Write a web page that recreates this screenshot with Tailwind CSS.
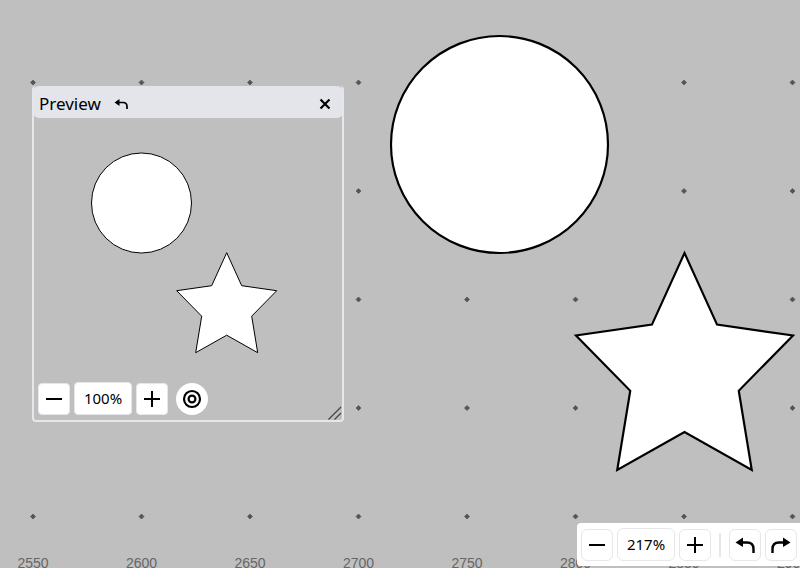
<!DOCTYPE html>
<html lang="en">
<head>
    <meta charset="UTF-8">
    <title>Preview</title>
    <script src="https://cdn.jsdelivr.net/npm/@tailwindcss/browser@4"></script>
</head>
<body class="overflow-hidden">
    <div class="relative w-[800px] h-[568px] bg-[#bfbfbf] overflow-hidden font-['Noto_Sans',sans-serif]">

        <!-- canvas -->
        <svg class="absolute inset-0" width="800" height="568" viewBox="0 0 800 568">
            <g id="dots" fill="#555" stroke="#555" stroke-width="0.700">
                <path d="M33 80l2.500 2.500-2.500 2.500-2.500-2.500z M141.500 80l2.500 2.500-2.500 2.500-2.500-2.500z M250 80l2.500 2.500-2.500 2.500-2.500-2.500z M358.500 80l2.500 2.500-2.500 2.500-2.500-2.500z M467 80l2.500 2.500-2.500 2.500-2.500-2.500z M575.500 80l2.500 2.500-2.500 2.500-2.500-2.500z M684 80l2.500 2.500-2.500 2.500-2.500-2.500z M792.500 80l2.500 2.500-2.500 2.500-2.500-2.500z"/>
                <path d="M358.500 188.500l2.500 2.500-2.500 2.500-2.500-2.500z M467 188.500l2.500 2.500-2.500 2.500-2.500-2.500z M575.500 188.500l2.500 2.500-2.500 2.500-2.500-2.500z M684 188.500l2.500 2.500-2.500 2.500-2.500-2.500z M792.500 188.500l2.500 2.500-2.500 2.500-2.500-2.500z"/>
                <path d="M358.500 297l2.500 2.500-2.500 2.500-2.500-2.500z M467 297l2.500 2.500-2.500 2.500-2.500-2.500z M575.500 297l2.500 2.500-2.500 2.500-2.500-2.500z M684 297l2.500 2.500-2.500 2.500-2.500-2.500z M792.500 297l2.500 2.500-2.500 2.500-2.500-2.500z"/>
                <path d="M358.500 405.500l2.500 2.500-2.500 2.500-2.500-2.500z M467 405.500l2.500 2.500-2.500 2.500-2.500-2.500z M575.500 405.500l2.500 2.500-2.500 2.500-2.500-2.500z M684 405.500l2.500 2.500-2.500 2.500-2.500-2.500z M792.500 405.500l2.500 2.500-2.500 2.500-2.500-2.500z"/>
                <path d="M33 514l2.500 2.500-2.500 2.500-2.500-2.500z M141.500 514l2.500 2.500-2.500 2.500-2.500-2.500z M250 514l2.500 2.500-2.500 2.500-2.500-2.500z M358.500 514l2.500 2.500-2.500 2.500-2.500-2.500z M467 514l2.500 2.500-2.500 2.500-2.500-2.500z M575.500 514l2.500 2.500-2.500 2.500-2.500-2.500z M684 514l2.500 2.500-2.500 2.500-2.500-2.500z M792.500 514l2.500 2.500-2.500 2.500-2.500-2.500z"/>
            </g>
            <g fill="#666" font-family="Liberation Sans, sans-serif" font-size="14" text-anchor="middle">
                <text x="33" y="567.500">2550</text>
                <text x="141.500" y="567.500">2600</text>
                <text x="250" y="567.500">2650</text>
                <text x="358.500" y="567.500">2700</text>
                <text x="467" y="567.500">2750</text>
                <text x="575.500" y="567.500">2800</text>
                <text x="684" y="567.500">2850</text>
                <text x="792.500" y="567.500">2900</text>
            </g>
            <circle cx="499.500" cy="144.500" r="108.500" fill="#fff" stroke="#000" stroke-width="2.170"/>
            <polygon transform="translate(576 253) scale(2.170)" points="50,0 65,33 100,38 75,63.500 81,100 50,82.500 19,100 25,63.500 0,38 35,33" fill="#fff" stroke="#000" stroke-width="1"/>
        </svg>

        <!-- preview window -->
        <div class="absolute left-[32px] top-[86px] w-[312px] h-[336px] flex flex-col bg-[#bfbfbf] border-2 border-t-0 border-[#e5e7eb] rounded">
            <div class="-mx-[1px] h-[32px] shrink-0 flex items-center justify-between pt-[3px] pl-[6px] pr-[12px] bg-[#e3e5ea] rounded-md">
                <div class="flex items-center gap-[12px]">
                    <span class="text-[17px] font-[450] text-black">Preview</span>
                    <svg width="16" height="16" viewBox="0 -0.500 16 16" fill="none"><path d="M6.500 2.500L1.500 6l5 3.500z" fill="#000"/><path d="M5 6h5c2.500 0 4 1.500 4 4v2.500" stroke="#000" stroke-width="1.700"/></svg>
                </div>
                <svg width="12" height="12" viewBox="0 0 12 12" fill="none"><path d="M1.500 1.500l9 9M10.500 1.500l-9 9" stroke="#000" stroke-width="2.200"/></svg>
            </div>

            <svg class="absolute left-[-2px] top-[30px]" width="312" height="250" viewBox="32 116 312 250">
                <circle cx="141.500" cy="203" r="50" fill="#fff" stroke="#000" stroke-width="1"/>
                <polygon transform="translate(176.700 252.700)" points="50,0 65,33 100,38 75,63.500 81,100 50,82.500 19,100 25,63.500 0,38 35,33" fill="#fff" stroke="#000" stroke-width="1"/>
            </svg>

            <div class="mt-auto mb-[5px] ml-[4px] flex items-center gap-[4px] relative">
                <button class="w-[32px] h-[32px] flex items-center justify-center bg-white rounded border border-[#e5e7eb]">
                    <svg width="18" height="18" viewBox="0 0 18 18"><path d="M1 9h16" stroke="#000" stroke-width="2"/></svg>
                </button>
                <div class="w-[58px] h-[33px] flex items-center justify-center bg-white rounded border border-[#e5e7eb] text-[15px] text-black">100%</div>
                <button class="w-[32px] h-[32px] flex items-center justify-center bg-white rounded border border-[#e5e7eb]">
                    <svg width="18" height="18" viewBox="0 0 18 18"><path d="M1 9h16M9 1v16" stroke="#000" stroke-width="2"/></svg>
                </button>
                <button class="ml-[4px] w-[32px] h-[32px] flex items-center justify-center bg-white rounded-full">
                    <svg width="20" height="20" viewBox="0 0 20 20" fill="none"><circle cx="10" cy="10" r="8" stroke="#000" stroke-width="2.200"/><circle cx="10" cy="10" r="3.400" stroke="#000" stroke-width="2.200"/></svg>
                </button>
            </div>

            <svg class="absolute right-[-1px] bottom-[-1px]" width="16" height="16" viewBox="0 0 16 16" fill="none"><path d="M1.500 14.500L14 2M7.500 14.500L14 8" stroke="#444" stroke-width="1.300"/></svg>
        </div>

        <!-- main zoom bar -->
        <div class="absolute right-0 bottom-[2px] h-[43px] w-[223px] flex items-center gap-[4px] pl-[4px] bg-white rounded-l">
            <button class="w-[32px] h-[32px] flex items-center justify-center bg-white rounded-md border border-[#e5e7eb]">
                <svg width="18" height="18" viewBox="0 0 18 18"><path d="M1 9h16" stroke="#000" stroke-width="2"/></svg>
            </button>
            <div class="w-[58px] h-[33px] flex items-center justify-center bg-white rounded-md border border-[#e5e7eb] text-[15px] text-black">217%</div>
            <button class="w-[32px] h-[32px] flex items-center justify-center bg-white rounded-md border border-[#e5e7eb]">
                <svg width="18" height="18" viewBox="0 0 18 18"><path d="M1 9h16M9 1v16" stroke="#000" stroke-width="2"/></svg>
            </button>
            <div class="mx-[4px] w-[2px] h-[24px] bg-[#e5e7eb]"></div>
            <button class="w-[32px] h-[32px] flex items-center justify-center bg-white rounded-md border border-[#e5e7eb]">
                <svg width="22" height="22" viewBox="0 0 22 22" fill="none"><path d="M9 3.500L1.500 8.500 9 13z" fill="#000"/><path d="M7 8.500h6c4 0 6.500 2.500 6.500 6.500v4" stroke="#000" stroke-width="2.400"/></svg>
            </button>
            <button class="w-[32px] h-[32px] flex items-center justify-center bg-white rounded-md border border-[#e5e7eb]">
                <svg width="22" height="22" viewBox="0 0 22 22" fill="none"><path d="M13 3.500L20.500 8.500 13 13z" fill="#000"/><path d="M15 8.500H9c-4 0-6.500 2.500-6.500 6.500v4" stroke="#000" stroke-width="2.400"/></svg>
            </button>
        </div>
    </div>
</body>
</html>
